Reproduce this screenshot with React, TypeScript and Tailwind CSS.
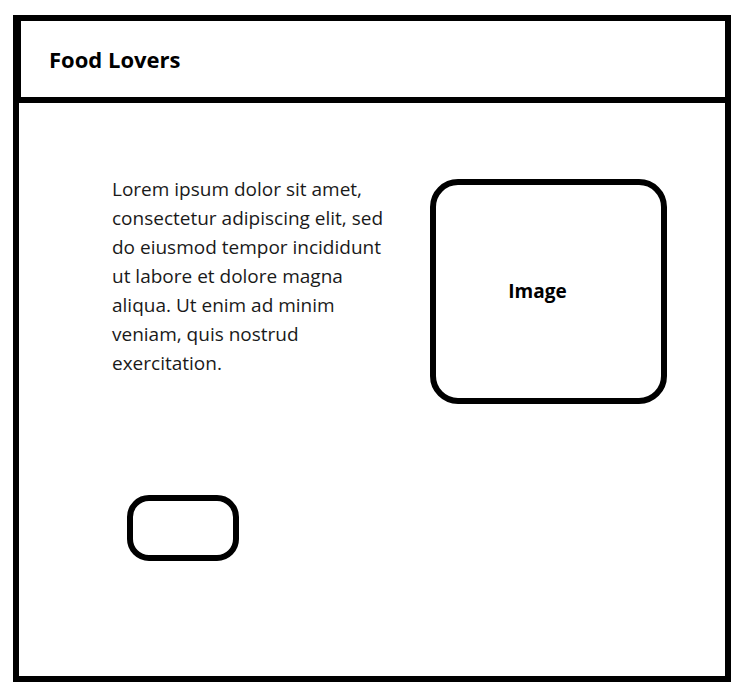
export default function App() {
  return (
    <div className="min-h-screen bg-white pl-[13px] pt-[15px] font-['Open_Sans',sans-serif]">
      <div className="flex h-[667px] w-[718px] flex-col border-[6px] border-black">
        {/* Header */}
        <header className="flex h-[82px] shrink-0 items-center border-b-[6px] border-l-2 border-black pl-[28px]">
          <h1 className="text-[22px] font-bold text-black">Food Lovers</h1>
        </header>

        {/* Body */}
        <main className="flex flex-1 flex-col">
          <div className="flex items-start pt-[72px]">
            <p className="ml-[93px] w-[282px] text-[19px] leading-[29px] text-[#1a1a1a]">
              Lorem ipsum dolor sit amet, consectetur adipiscing elit, sed do eiusmod tempor
              incididunt ut labore et dolore magna aliqua. Ut enim ad minim veniam, quis nostrud
              exercitation.
            </p>
            <div className="ml-[36px] mt-[4px] flex h-[225px] w-[237px] items-center justify-center rounded-[28px] border-[6px] border-black pr-[22px]">
              <span className="text-[19px] font-bold text-black">Image</span>
            </div>
          </div>
          <button className="ml-[108px] mt-[91px] h-[66px] w-[112px] rounded-[22px] border-[6px] border-black bg-white" />
        </main>
      </div>
    </div>
  );
}
